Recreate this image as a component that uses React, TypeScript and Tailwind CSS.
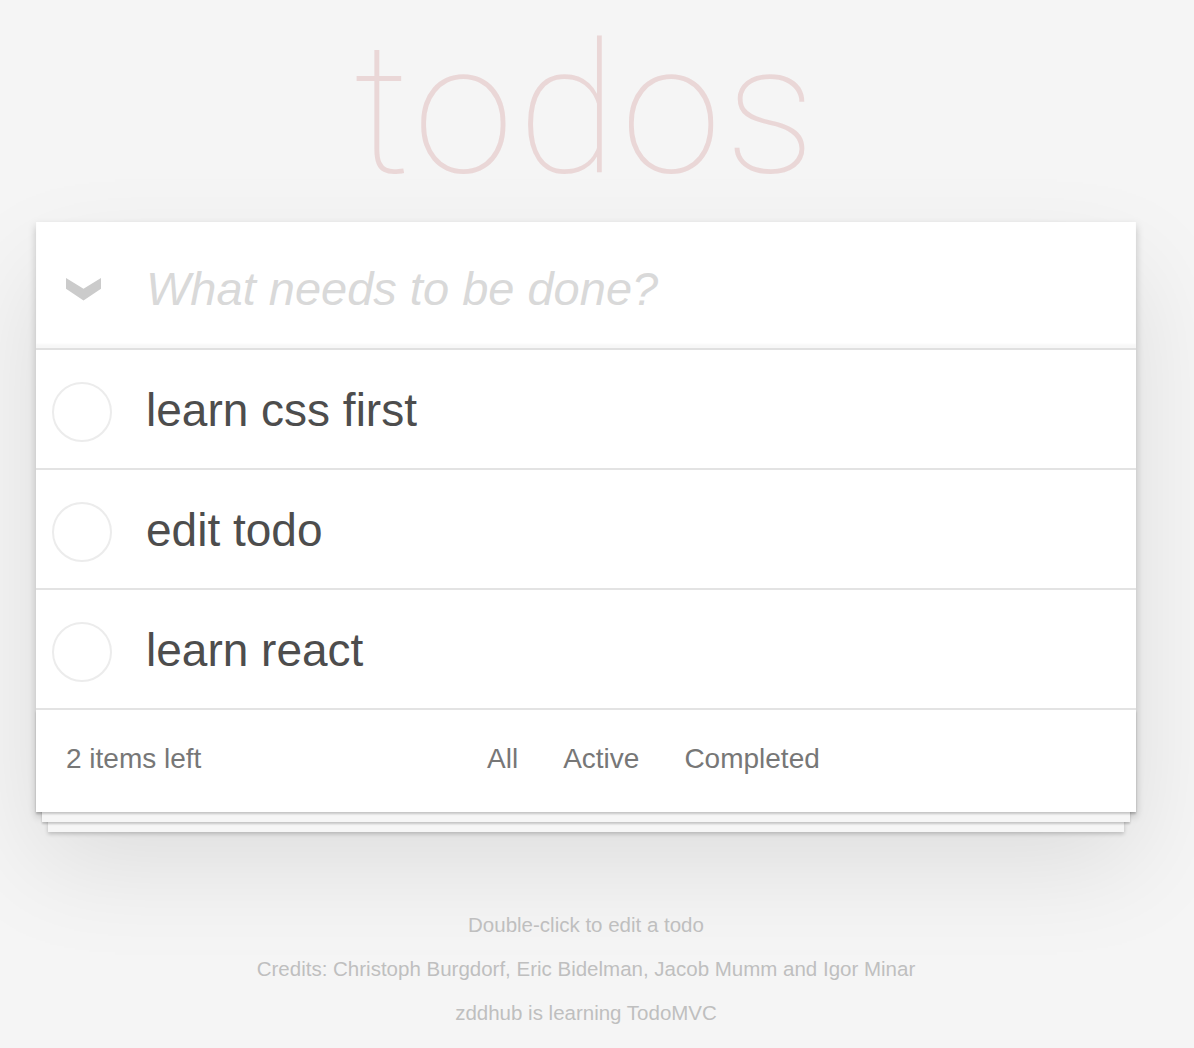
const todos = [
  { id: 1, title: "learn css first" },
  { id: 2, title: "edit todo" },
  { id: 3, title: "learn react" },
];

const filters = ["All", "Active", "Completed"];

function ToggleAllIcon() {
  return (
    <svg width="35" height="23" viewBox="0 0 35 23" className="block">
      <polygon
        points="0,0 17.5,10.7 35,0 35,10.7 17.5,22.4 0,10.7"
        fill="#cbcbcb"
      />
    </svg>
  );
}

function TodoItem({ title }: { title: string }) {
  return (
    <li className="flex h-[120px] border-b-2 border-[#e3e3e3]">
      <span className="ml-[16px] mt-[32px] h-[60px] w-[60px] shrink-0 rounded-full border-2 border-[#ececec]" />
      <label className="pl-[34px] pt-[33px] text-[46px] leading-[1.2] text-[#4d4d4d]">
        {title}
      </label>
    </li>
  );
}

export default function App() {
  return (
    <div className="min-h-screen bg-[#f5f5f5] font-['Liberation_Sans',Arial,sans-serif] font-light">
      <div className="ml-[36px] w-[1100px]">
        <h1 className="h-[222px] pl-[1px] text-center font-['Roboto',sans-serif] text-[182px] font-thin leading-[219px] tracking-[4px] text-[rgba(175,47,47,0.15)]">
          todos
        </h1>

        <section className="bg-white shadow-[0_4px_8px_0_rgba(0,0,0,0.2),0_50px_100px_0_rgba(0,0,0,0.1)]">
          <header className="flex h-[128px] border-b-2 border-[#e0e0e0] shadow-[inset_0_-4px_2px_rgba(0,0,0,0.03)]">
            <div className="ml-[30px] mt-[56px]">
              <ToggleAllIcon />
            </div>
            <div className="pl-[45px] pt-[34px] text-[47px] italic leading-[1.4] text-[#d9d9d9]">
              What needs to be done?
            </div>
          </header>

          <ul>
            {todos.map((todo) => (
              <TodoItem key={todo.id} title={todo.title} />
            ))}
          </ul>

          <footer className="flex h-[102px] items-center px-[30px] pb-[4px] text-[28px] leading-none text-[#777] shadow-[0_2px_2px_rgba(0,0,0,0.2),0_16px_0_-6px_#f6f6f6,0_18px_2px_-6px_rgba(0,0,0,0.2),0_32px_0_-12px_#f6f6f6,0_34px_4px_-12px_rgba(0,0,0,0.2)]">
            <span className="w-[407px] shrink-0">2 items left</span>
            <ul className="flex gap-[17px]">
              {filters.map((filter) => (
                <li key={filter}>
                  <a className="block px-[14px]">{filter}</a>
                </li>
              ))}
            </ul>
          </footer>
        </section>

        <div className="mt-[91px] text-center text-[20.5px] leading-[44px] text-[#bfbfbf]">
          <p>Double-click to edit a todo</p>
          <p>Credits: Christoph Burgdorf, Eric Bidelman, Jacob Mumm and Igor Minar</p>
          <p>zddhub is learning TodoMVC</p>
        </div>
      </div>
    </div>
  );
}
